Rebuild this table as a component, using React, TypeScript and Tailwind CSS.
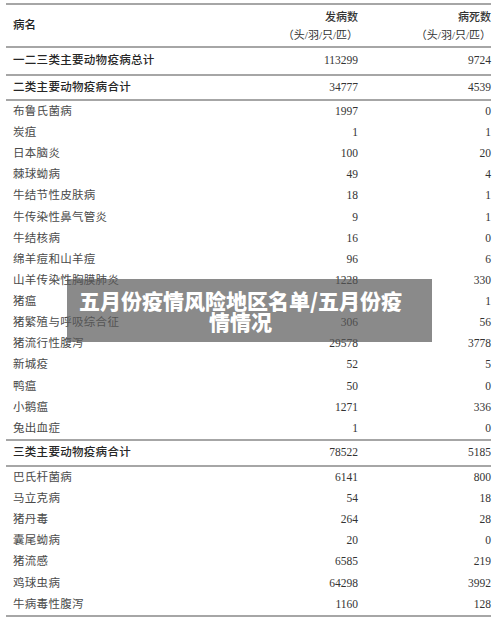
import React from "react";

const groupA: [string, string, string][] = [
  ["布鲁氏菌病", "1997", "0"],
  ["炭疽", "1", "1"],
  ["日本脑炎", "100", "20"],
  ["棘球蚴病", "49", "4"],
  ["牛结节性皮肤病", "18", "1"],
  ["牛传染性鼻气管炎", "9", "1"],
  ["牛结核病", "16", "0"],
  ["绵羊痘和山羊痘", "96", "6"],
  ["山羊传染性胸膜肺炎", "1228", "330"],
  ["猪瘟", "2", "1"],
  ["猪繁殖与呼吸综合征", "306", "56"],
  ["猪流行性腹泻", "29578", "3778"],
  ["新城疫", "52", "5"],
  ["鸭瘟", "50", "0"],
  ["小鹅瘟", "1271", "336"],
  ["兔出血症", "1", "0"],
];

const groupB: [string, string, string][] = [
  ["巴氏杆菌病", "6141", "800"],
  ["马立克病", "54", "18"],
  ["猪丹毒", "264", "28"],
  ["囊尾蚴病", "20", "0"],
  ["猪流感", "6585", "219"],
  ["鸡球虫病", "64298", "3992"],
  ["牛病毒性腹泻", "1160", "128"],
];

function Row({
  name,
  a,
  b,
  h,
  bold,
}: {
  name: string;
  a: string;
  b: string;
  h: string;
  bold?: boolean;
}) {
  return (
    <div className={`flex items-center ${h}`}>
      <div
        className={`flex-1 pl-[7px] text-[11.5px] tracking-[0.3px] ${
          bold ? "text-[#262626] font-medium" : "text-[#4a4a4a]"
        }`}
      >
        {name}
      </div>
      <div className="w-[108px] text-right text-[11.5px] text-[#333]">{a}</div>
      <div className="w-[133px] text-right text-[11.5px] text-[#333]">{b}</div>
    </div>
  );
}

export default function App() {
  return (
    <div
      className="relative w-[500px] h-[621px] bg-white overflow-hidden pl-[6px] pr-[9px] pt-[3px]"
      style={{ fontFamily: '"Liberation Serif", "Noto Sans CJK SC", serif' }}
    >
      <div className="border-t-2 border-[#a6a6a6]">
        <div className="flex items-center h-[41px]">
          <div className="flex-1 pl-[7px] text-[11.5px] font-medium text-[#222]">病名</div>
          <div className="w-[108px] flex flex-col items-end text-[11px] leading-[18px] text-[#333]">
            <span className="font-medium">发病数</span>
            <span>（头/羽/只/匹）</span>
          </div>
          <div className="w-[133px] flex flex-col items-end text-[11px] leading-[18px] text-[#333]">
            <span className="font-medium">病死数</span>
            <span>（头/羽/只/匹）</span>
          </div>
        </div>
      </div>
      <div className="border-t-2 border-[#a6a6a6]">
        <Row name="一二三类主要动物疫病总计" a="113299" b="9724" h="h-[26px]" bold />
      </div>
      <div className="border-t-2 border-[#a6a6a6]">
        <Row name="二类主要动物疫病合计" a="34777" b="4539" h="h-[23px]" bold />
      </div>
      <div className="border-t-2 border-[#a6a6a6]">
        {groupA.map(([n, a, b]) => (
          <Row key={n} name={n} a={a} b={b} h="h-[21.13px]" />
        ))}
      </div>
      <div className="border-t-2 border-[#a6a6a6]">
        <Row name="三类主要动物疫病合计" a="78522" b="5185" h="h-[24px]" bold />
      </div>
      <div className="border-t-2 border-b-2 border-[#a6a6a6]">
        {groupB.map(([n, a, b]) => (
          <Row key={n} name={n} a={a} b={b} h="h-[21.14px]" />
        ))}
      </div>

      <div className="absolute left-[67px] top-[279px] w-[365px] h-[63px] bg-[rgba(88,88,88,0.7)] pl-[6px] pr-[24px] flex items-center justify-center">
        <div
          className="text-center text-white text-[21px] leading-[21px] font-black"
          style={{ fontFamily: '"Noto Sans CJK SC", sans-serif' }}
        >
          五月份疫情风险地区名单/五月份疫情情况
        </div>
      </div>
    </div>
  );
}
